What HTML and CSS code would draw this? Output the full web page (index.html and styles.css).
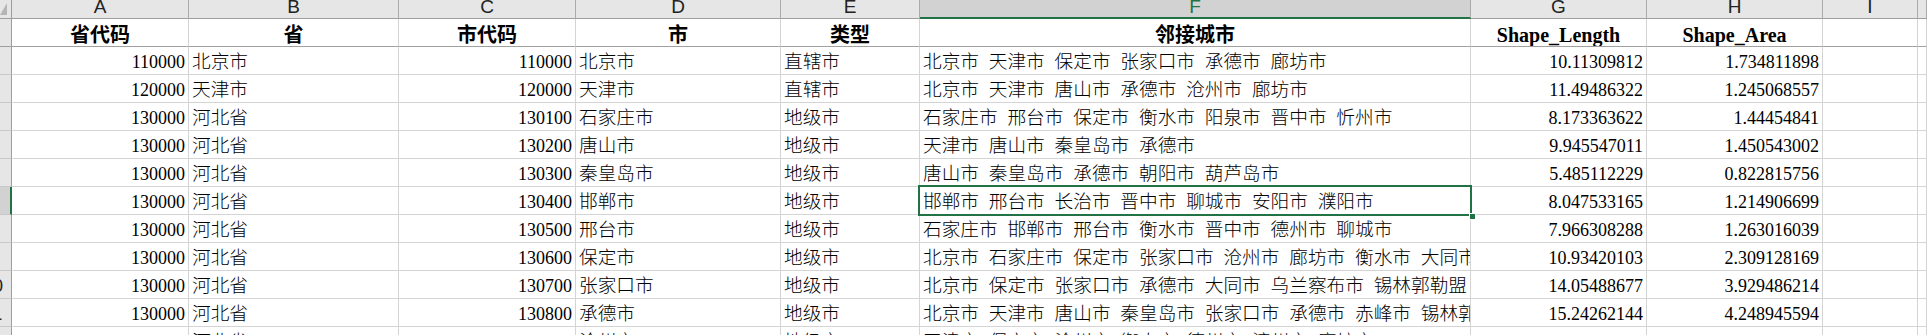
FILE: index.html
```html
<!DOCTYPE html>
<html lang="zh">
<head>
<meta charset="utf-8">
<title>Sheet</title>
<link rel="stylesheet" href="styles.css">
</head>
<body>
<div class="sheet">
  <div class="corner"><svg width="11" height="18" viewBox="0 0 11 18"><polygon points="0,15 7,15 7,3" fill="#b5b5b5"/></svg></div>
  <div class="ch">A</div><div class="ch">B</div><div class="ch">C</div><div class="ch">D</div><div class="ch">E</div><div class="ch sel">F</div><div class="ch">G</div><div class="ch">H</div><div class="ch">I</div><div class="ch"></div>

  <div class="rh top"><span>1</span></div>
  <div class="c h">省代码</div><div class="c h">省</div><div class="c h">市代码</div><div class="c h">市</div><div class="c h">类型</div><div class="c h">邻接城市</div><div class="c h">Shape_Length</div><div class="c h">Shape_Area</div><div class="c h"></div><div class="c h"></div>

  <div class="rh"><span>2</span></div>
  <div class="c num">110000</div><div class="c zh">北京市</div><div class="c num">110000</div><div class="c zh">北京市</div><div class="c zh">直辖市</div><div class="c zh">北京市 天津市 保定市 张家口市 承德市 廊坊市</div><div class="c num">10.11309812</div><div class="c num">1.734811898</div><div class="c"></div><div class="c"></div>

  <div class="rh"><span>3</span></div>
  <div class="c num">120000</div><div class="c zh">天津市</div><div class="c num">120000</div><div class="c zh">天津市</div><div class="c zh">直辖市</div><div class="c zh">北京市 天津市 唐山市 承德市 沧州市 廊坊市</div><div class="c num">11.49486322</div><div class="c num">1.245068557</div><div class="c"></div><div class="c"></div>

  <div class="rh"><span>4</span></div>
  <div class="c num">130000</div><div class="c zh">河北省</div><div class="c num">130100</div><div class="c zh">石家庄市</div><div class="c zh">地级市</div><div class="c zh">石家庄市 邢台市 保定市 衡水市 阳泉市 晋中市 忻州市</div><div class="c num">8.173363622</div><div class="c num">1.44454841</div><div class="c"></div><div class="c"></div>

  <div class="rh"><span>5</span></div>
  <div class="c num">130000</div><div class="c zh">河北省</div><div class="c num">130200</div><div class="c zh">唐山市</div><div class="c zh">地级市</div><div class="c zh">天津市 唐山市 秦皇岛市 承德市</div><div class="c num">9.945547011</div><div class="c num">1.450543002</div><div class="c"></div><div class="c"></div>

  <div class="rh"><span>6</span></div>
  <div class="c num">130000</div><div class="c zh">河北省</div><div class="c num">130300</div><div class="c zh">秦皇岛市</div><div class="c zh">地级市</div><div class="c zh">唐山市 秦皇岛市 承德市 朝阳市 葫芦岛市</div><div class="c num">5.485112229</div><div class="c num">0.822815756</div><div class="c"></div><div class="c"></div>

  <div class="rh sel"><span>7</span></div>
  <div class="c num">130000</div><div class="c zh">河北省</div><div class="c num">130400</div><div class="c zh">邯郸市</div><div class="c zh">地级市</div><div class="c zh">邯郸市 邢台市 长治市 晋中市 聊城市 安阳市 濮阳市</div><div class="c num">8.047533165</div><div class="c num">1.214906699</div><div class="c"></div><div class="c"></div>

  <div class="rh"><span>8</span></div>
  <div class="c num">130000</div><div class="c zh">河北省</div><div class="c num">130500</div><div class="c zh">邢台市</div><div class="c zh">地级市</div><div class="c zh">石家庄市 邯郸市 邢台市 衡水市 晋中市 德州市 聊城市</div><div class="c num">7.966308288</div><div class="c num">1.263016039</div><div class="c"></div><div class="c"></div>

  <div class="rh"><span>9</span></div>
  <div class="c num">130000</div><div class="c zh">河北省</div><div class="c num">130600</div><div class="c zh">保定市</div><div class="c zh">地级市</div><div class="c zh">北京市 石家庄市 保定市 张家口市 沧州市 廊坊市 衡水市 大同市 朔州市 忻州市</div><div class="c num">10.93420103</div><div class="c num">2.309128169</div><div class="c"></div><div class="c"></div>

  <div class="rh"><span>10</span></div>
  <div class="c num">130000</div><div class="c zh">河北省</div><div class="c num">130700</div><div class="c zh">张家口市</div><div class="c zh">地级市</div><div class="c zh">北京市 保定市 张家口市 承德市 大同市 乌兰察布市 锡林郭勒盟 朔州市 忻州市</div><div class="c num">14.05488677</div><div class="c num">3.929486214</div><div class="c"></div><div class="c"></div>

  <div class="rh"><span>11</span></div>
  <div class="c num">130000</div><div class="c zh">河北省</div><div class="c num">130800</div><div class="c zh">承德市</div><div class="c zh">地级市</div><div class="c zh">北京市 天津市 唐山市 秦皇岛市 张家口市 承德市 赤峰市 锡林郭勒盟 朝阳市 葫芦岛市</div><div class="c num">15.24262144</div><div class="c num">4.248945594</div><div class="c"></div><div class="c"></div>

  <div class="rh"><span>12</span></div>
  <div class="c num">130000</div><div class="c zh">河北省</div><div class="c num">130900</div><div class="c zh">沧州市</div><div class="c zh">地级市</div><div class="c zh">天津市 保定市 沧州市 衡水市 德州市 滨州市 廊坊市</div><div class="c num">10.15470052</div><div class="c num">1.463588123</div><div class="c"></div><div class="c"></div>

  <div class="selection"><div class="handle"></div></div>
</div>
</body>
</html>
```

FILE: styles.css
```css
html, body {
  margin: 0;
  padding: 0;
  background: #ffffff;
}
body {
  width: 1927px;
  height: 335px;
  overflow: hidden;
}
.sheet {
  position: relative;
  height: 335px;
  overflow: hidden;
  display: grid;
  grid-template-columns: 12px 177px 210px 177px 205px 139px 551px 176px 176px 95px 1fr;
  grid-template-rows: 19px repeat(12, 28px);
  font-family: "Liberation Serif", "Noto Sans CJK SC", serif;
  color: #000000;
}
.corner {
  background: #e6e6e6;
  border-right: 1px solid #9e9e9e;
  border-bottom: 1px solid #9e9e9e;
  box-sizing: border-box;
  overflow: hidden;
}
.corner svg {
  display: block;
}
.ch {
  box-sizing: border-box;
  background: #e6e6e6;
  border-right: 1px solid #ababab;
  border-bottom: 1px solid #9e9e9e;
  font-family: "Liberation Sans", sans-serif;
  font-size: 19px;
  line-height: 14px;
  text-align: center;
  color: #222222;
  overflow: hidden;
}
.ch.sel {
  background: #d2d2d2;
  color: #217346;
  border-bottom: 2px solid #217346;
}
.rh {
  box-sizing: border-box;
  background: #e6e6e6;
  border-right: 1px solid #9e9e9e;
  border-bottom: 1px solid #c8c8c8;
  overflow: hidden;
  white-space: nowrap;
  font-family: "Liberation Sans", sans-serif;
  font-size: 18px;
  line-height: 20px;
  padding-top: 5px;
  color: #222222;
}
.rh.top {
  border-bottom-color: #9e9e9e;
}
.rh.sel {
  background: #d2d2d2;
  border-right: 2px solid #217346;
}
.rh span {
  display: block;
  width: 40px;
  margin-left: -27px;
  text-align: center;
}
.c {
  box-sizing: border-box;
  border-right: 1px solid #d4d4d4;
  border-bottom: 1px solid #d4d4d4;
  overflow: hidden;
  white-space: nowrap;
  padding: 5px 3px 0 3px;
  line-height: 20px;
  font-size: 18px;
}
.num {
  text-align: right;
}
.zh {
  font-size: 18.67px;
  font-weight: 300;
  word-spacing: 5.15px;
}
.h {
  font-weight: bold;
  font-size: 20px;
  text-align: center;
  padding-top: 6px;
  border-bottom-color: #a0a0a0;
}
.selection {
  position: absolute;
  left: 918px;
  top: 185px;
  width: 554px;
  height: 31px;
  box-sizing: border-box;
  border: 2px solid #217346;
}
.handle {
  position: absolute;
  right: -6px;
  bottom: -6px;
  width: 7px;
  height: 7px;
  box-sizing: border-box;
  background: #217346;
  border: 1px solid #ffffff;
}
```
